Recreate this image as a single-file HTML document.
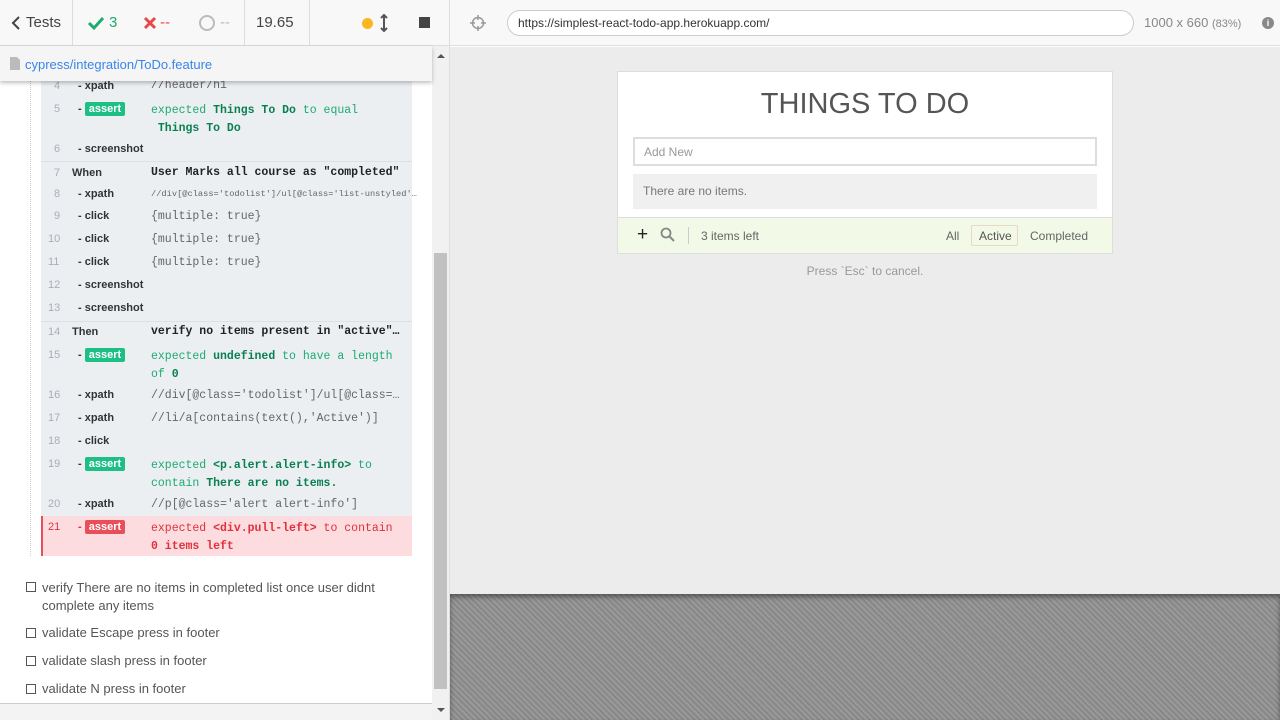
<!DOCTYPE html>
<html><head><style>
*{margin:0;padding:0;box-sizing:border-box}
body{width:1280px;height:720px;overflow:hidden;font-family:"Liberation Sans",sans-serif;background:#fff;position:relative}
.a{position:absolute;white-space:nowrap}
.m{font-family:"Liberation Mono",monospace;font-size:11.5px}
.n{color:#a9adb8;font-size:11px;font-family:"Liberation Sans",sans-serif}
.c{font-size:11px;font-weight:bold;color:#333;font-family:"Liberation Sans",sans-serif}
.badge{background:#1dbf85;color:#fff;font-size:11px;font-weight:bold;padding:0 4px;border-radius:2px;display:inline-block;line-height:14px}
.g{color:#1dab6f}.gb{color:#0a8050;font-weight:bold}
.gr{color:#666}
.cb{width:10px;height:10px;border:1px solid #555;display:inline-block}
.tt{font-size:13px;color:#555}
</style></head><body>
<div class="a" style="left:0;top:0;width:450px;height:46px;background:#f8f8f8;border-bottom:1px solid #ddd"></div>
<div class="a" style="left:72px;top:0;width:1px;height:46px;background:#ddd"></div>
<div class="a" style="left:244px;top:0;width:1px;height:46px;background:#ddd"></div>
<div class="a" style="left:309px;top:0;width:1px;height:46px;background:#ddd"></div>
<div class="a" style="left:449px;top:0;width:1px;height:720px;background:#ddd"></div>
<svg class="a" style="left:11px;top:16px" width="10" height="14"><path d="M8 1 L2 7 L8 13" stroke="#444" stroke-width="2" fill="none"/></svg>
<div class="a" style="left:26px;top:14px;font-size:15px;color:#444">Tests</div>
<svg class="a" style="left:87px;top:15px" width="18" height="16"><path d="M2 8 L7 13 L16 3" stroke="#1dab6f" stroke-width="3" fill="none"/></svg>
<div class="a" style="left:109px;top:14px;font-size:15px;color:#1dab6f">3</div>
<svg class="a" style="left:143px;top:16px" width="14" height="14"><path d="M2 2 L12 12 M12 2 L2 12" stroke="#e94848" stroke-width="3"/></svg>
<div class="a" style="left:160px;top:14px;font-size:15px;color:#e94848">--</div>
<svg class="a" style="left:198px;top:14px" width="18" height="18"><circle cx="9" cy="9" r="7" stroke="#bbb" stroke-width="2" fill="none"/></svg>
<div class="a" style="left:220px;top:14px;font-size:15px;color:#bbb">--</div>
<div class="a" style="left:256px;top:14px;font-size:15px;color:#444">19.65</div>
<div class="a" style="left:362px;top:18px;width:11px;height:11px;border-radius:50%;background:#fbb620"></div>
<svg class="a" style="left:380px;top:14px" width="8" height="18"><path d="M4 1 L4 17 M1 4 L4 1 L7 4 M1 14 L4 17 L7 14" stroke="#555" stroke-width="2" fill="none"/></svg>
<div class="a" style="left:419px;top:17px;width:11px;height:11px;background:#444"></div>
<div class="a" style="left:0;top:46px;width:432px;height:35px;background:#f5f5f5;box-shadow:0 2px 4px rgba(0,0,0,.25);z-index:2"></div>
<svg class="a" style="left:10px;top:57px;z-index:3" width="10" height="13"><path d="M0 0 H7 L10 3 V13 H0Z" fill="#bbb"/></svg>
<div class="a" style="left:25px;top:57px;font-size:13px;color:#3a85e8;z-index:3">cypress/integration/ToDo.feature</div>
<div class="a" style="left:432px;top:46px;width:17px;height:674px;background:#f1f1f1"></div>
<div class="a" style="left:434px;top:253px;width:13px;height:436px;background:#c1c1c1"></div>
<div class="a" style="left:437px;top:54px;border:4px solid transparent;border-bottom:4px solid #555;border-top:0"></div>
<div class="a" style="left:437px;top:708px;border:4px solid transparent;border-top:4px solid #555;border-bottom:0"></div>
<div class="a" style="left:0;top:703px;width:432px;height:17px;background:#f3f3f3;border-top:1px solid #ccc"></div>
<div class="a" style="left:30px;top:81px;width:1px;height:475px;border-left:1px dotted #ccc"></div>
<div class="a" style="left:41px;top:81px;width:371px;height:475px;background:#eceff2"></div>
<div class="a" style="left:41px;top:161px;width:371px;height:1px;background:#dde0e4"></div>
<div class="a" style="left:41px;top:321px;width:371px;height:1px;background:#dde0e4"></div>
<div class="a" style="left:41px;top:516px;width:371px;height:40px;background:#fcdcdf;border-left:2px solid #e94f5a"></div>

<div class="a n" style="left:54px;top:80px">4</div><div class="a c" style="left:78px;top:80px">- xpath</div><div class="a m gr" style="left:151px;top:79px">//header/h1</div>
<div class="a n" style="left:54px;top:103px">5</div><div class="a c" style="left:78px;top:102px">- <span class="badge">assert</span></div><div class="a m" style="left:151px;top:102px;line-height:18px"><span class="g">expected </span><span class="gb">Things To Do</span><span class="g"> to equal</span><br>&nbsp;<span class="gb">Things To Do</span></div>
<div class="a n" style="left:54px;top:143px">6</div><div class="a c" style="left:78px;top:143px">- screenshot</div>
<div class="a n" style="left:54px;top:167px">7</div><div class="a c" style="left:72px;top:167px">When</div><div class="a m" style="left:151px;top:166px;font-weight:bold;color:#222">User Marks all course as "completed"</div>
<div class="a n" style="left:54px;top:188px">8</div><div class="a c" style="left:78px;top:188px">- xpath</div><div class="a m gr" style="left:151px;top:189px;font-size:8.7px">//div[@class='todolist']/ul[@class='list-unstyled'…</div>
<div class="a n" style="left:54px;top:210px">9</div><div class="a c" style="left:78px;top:210px">- click</div><div class="a m gr" style="left:151px;top:210px">{multiple: true}</div>
<div class="a n" style="left:48px;top:233px">10</div><div class="a c" style="left:78px;top:233px">- click</div><div class="a m gr" style="left:151px;top:233px">{multiple: true}</div>
<div class="a n" style="left:48px;top:256px">11</div><div class="a c" style="left:78px;top:256px">- click</div><div class="a m gr" style="left:151px;top:256px">{multiple: true}</div>
<div class="a n" style="left:48px;top:279px">12</div><div class="a c" style="left:78px;top:279px">- screenshot</div>
<div class="a n" style="left:48px;top:302px">13</div><div class="a c" style="left:78px;top:302px">- screenshot</div>
<div class="a n" style="left:48px;top:326px">14</div><div class="a c" style="left:72px;top:326px">Then</div><div class="a m" style="left:151px;top:325px;font-weight:bold;color:#222">verify no items present in "active"…</div>
<div class="a n" style="left:48px;top:349px">15</div><div class="a c" style="left:78px;top:348px">- <span class="badge">assert</span></div><div class="a m" style="left:151px;top:348px;line-height:18px"><span class="g">expected </span><span class="gb">undefined</span><span class="g"> to have a length</span><br><span class="g">of </span><span class="gb">0</span></div>
<div class="a n" style="left:48px;top:389px">16</div><div class="a c" style="left:78px;top:389px">- xpath</div><div class="a m gr" style="left:151px;top:389px">//div[@class='todolist']/ul[@class=…</div>
<div class="a n" style="left:48px;top:412px">17</div><div class="a c" style="left:78px;top:412px">- xpath</div><div class="a m gr" style="left:151px;top:412px">//li/a[contains(text(),'Active')]</div>
<div class="a n" style="left:48px;top:435px">18</div><div class="a c" style="left:78px;top:435px">- click</div>
<div class="a n" style="left:48px;top:458px">19</div><div class="a c" style="left:78px;top:457px">- <span class="badge">assert</span></div><div class="a m" style="left:151px;top:457px;line-height:18px"><span class="g">expected </span><span class="gb">&lt;p.alert.alert-info&gt;</span><span class="g"> to</span><br><span class="g">contain </span><span class="gb">There are no items.</span></div>
<div class="a n" style="left:48px;top:498px">20</div><div class="a c" style="left:78px;top:498px">- xpath</div><div class="a m gr" style="left:151px;top:498px">//p[@class='alert alert-info']</div>
<div class="a n" style="left:48px;top:521px;color:#e0303d">21</div><div class="a c" style="left:78px;top:520px;color:#e0303d">- <span class="badge" style="background:#e94f5a">assert</span></div><div class="a m" style="left:151px;top:520px;line-height:18px;color:#e0303d">expected <b>&lt;div.pull-left&gt;</b> to contain<br><b>0 items left</b></div>

<div class="a" style="left:26px;top:579px"><span class="cb"></span></div><div class="a tt" style="left:42px;top:579px;line-height:18px">verify There are no items in completed list once user didnt<br>complete any items</div>
<div class="a" style="left:26px;top:625px"><span class="cb"></span></div><div class="a tt" style="left:42px;top:625px">validate Escape press in footer</div>
<div class="a" style="left:26px;top:653px"><span class="cb"></span></div><div class="a tt" style="left:42px;top:653px">validate slash press in footer</div>
<div class="a" style="left:26px;top:681px"><span class="cb"></span></div><div class="a tt" style="left:42px;top:681px">validate N press in footer</div>

<div class="a" style="left:450px;top:0;width:830px;height:46px;background:#f8f8f8;border-bottom:1px solid #ddd"></div>
<svg class="a" style="left:470px;top:15px" width="16" height="16"><circle cx="8" cy="8" r="5.5" stroke="#999" stroke-width="1.5" fill="none"/><path d="M8 0V5M8 11V16M0 8H5M11 8H16" stroke="#999" stroke-width="1.5"/></svg>
<div class="a" style="left:507px;top:10px;width:627px;height:26px;border:1px solid #ccc;border-radius:13px;background:#fff"></div>
<div class="a" style="left:518px;top:16px;font-size:12px;color:#333">https://simplest-react-todo-app.herokuapp.com/</div>
<div class="a" style="left:1144px;top:15px;font-size:13px;color:#888">1000 x 660 <span style="font-size:11px">(83%)</span></div>
<div class="a" style="left:1262px;top:17px;width:12px;height:12px;border-radius:50%;background:#888;color:#fff;font-size:9px;text-align:center;line-height:12px;font-weight:bold">i</div>
<div class="a" style="left:450px;top:47px;width:830px;height:547px;background:#ececec"></div>
<div class="a" style="left:450px;top:594px;width:830px;height:126px;background:repeating-linear-gradient(45deg,#888 0,#888 2px,#999 2px,#999 4px);box-shadow:inset 0 3px 5px rgba(0,0,0,.4)"></div>
<div class="a" style="left:617px;top:71px;width:496px;height:183px;background:#fff;border:1px solid #ddd"></div>
<div class="a" style="left:617px;top:88px;width:496px;text-align:center;font-size:29px;color:#555">THINGS TO DO</div>
<div class="a" style="left:633px;top:137px;width:464px;height:29px;border:2px solid #ddd;background:#fff"></div>
<div class="a" style="left:644px;top:145px;font-size:12px;color:#999">Add New</div>
<div class="a" style="left:633px;top:174px;width:464px;height:35px;background:#f0f0f0"></div>
<div class="a" style="left:643px;top:184px;font-size:12px;color:#777">There are no items.</div>
<div class="a" style="left:618px;top:217px;width:494px;height:36px;background:#f2f9e7;border-top:1px solid #ddd"></div>
<div class="a" style="left:637px;top:224px;font-size:19px;color:#222">+</div>
<svg class="a" style="left:660px;top:227px" width="16" height="16"><circle cx="6" cy="6" r="4.5" stroke="#888" stroke-width="1.8" fill="none"/><path d="M9.5 9.5L14 14" stroke="#888" stroke-width="2"/></svg>
<div class="a" style="left:688px;top:227px;width:1px;height:17px;background:#ccc"></div>
<div class="a" style="left:701px;top:229px;font-size:12px;color:#666">3 items left</div>
<div class="a" style="left:946px;top:229px;font-size:12px;color:#666">All</div>
<div class="a" style="left:971px;top:225px;width:47px;height:21px;border:1px solid #e8d8c8;border-radius:2px"></div>
<div class="a" style="left:979px;top:229px;font-size:12px;color:#555">Active</div>
<div class="a" style="left:1030px;top:229px;font-size:12px;color:#666">Completed</div>
<div class="a" style="left:617px;top:264px;width:496px;text-align:center;font-size:12px;color:#999">Press `Esc` to cancel.</div>
</body></html>
